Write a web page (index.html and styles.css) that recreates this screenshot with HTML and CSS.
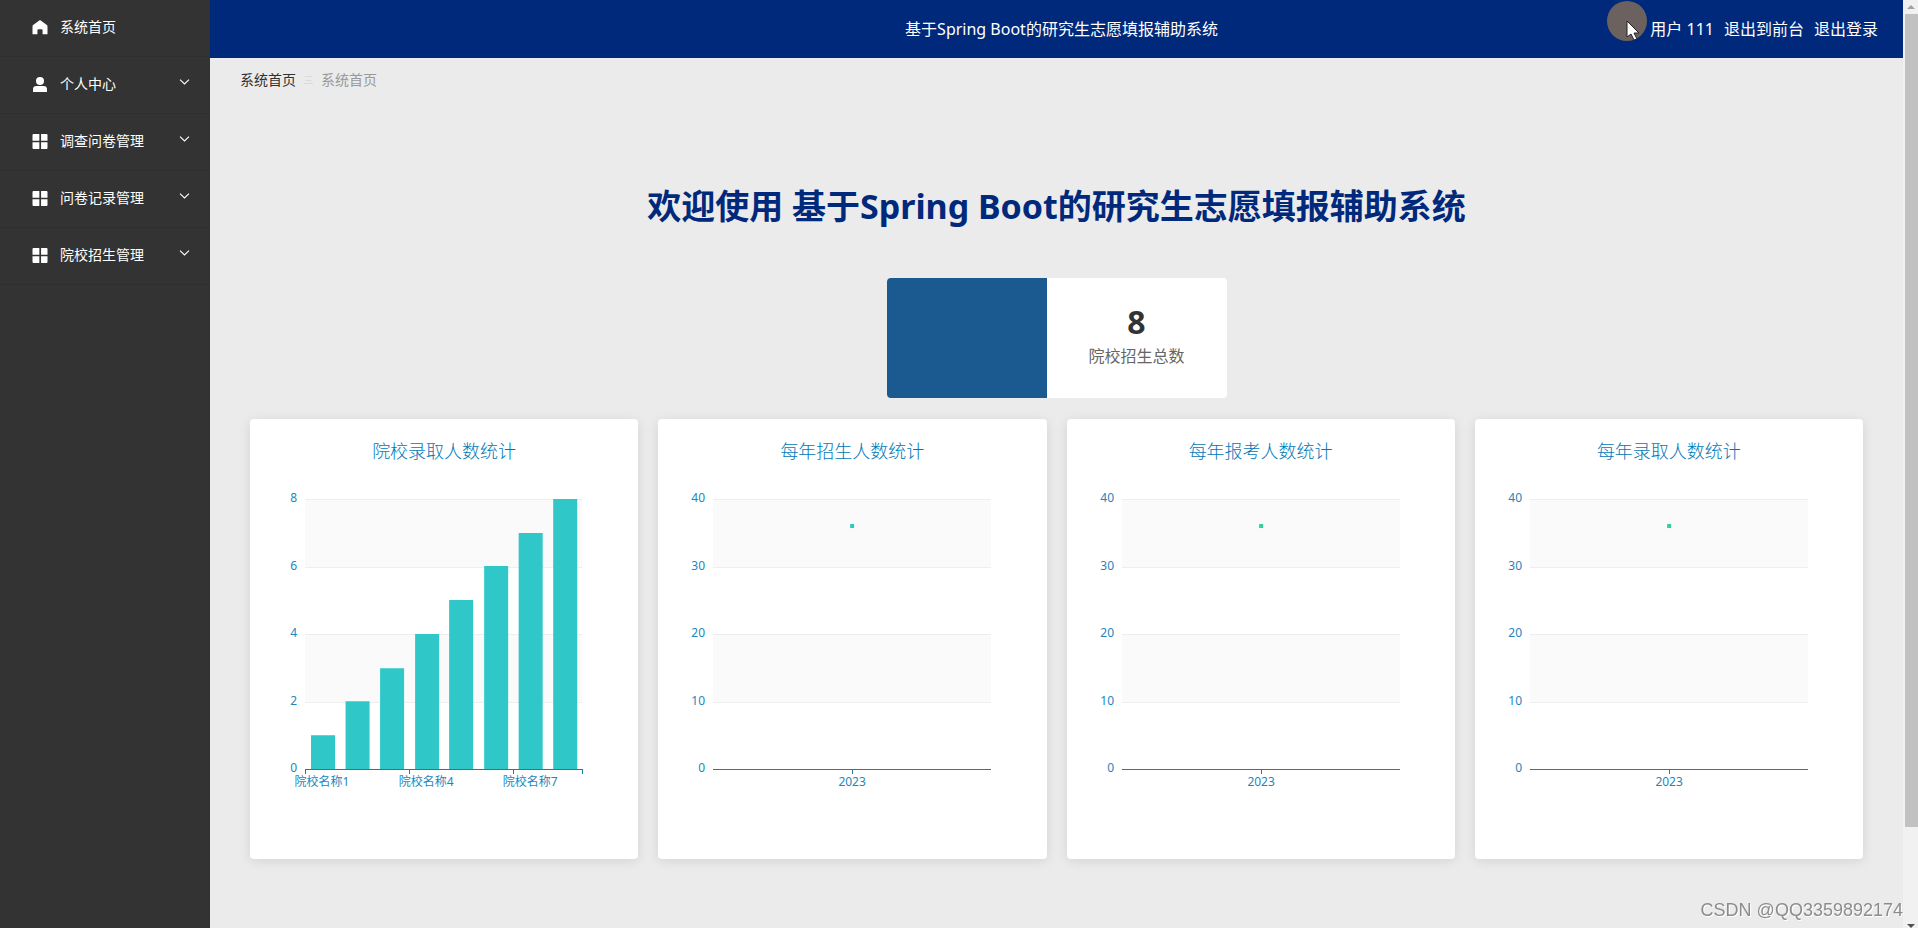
FILE: index.html
```html
<!DOCTYPE html>
<html lang="zh-CN">
<head>
<meta charset="utf-8">
<title>基于Spring Boot的研究生志愿填报辅助系统</title>
<link rel="stylesheet" href="styles.css">
</head>
<body>
<svg class="defs" aria-hidden="true">
  <symbol id="home" viewBox="0 0 14 14"><path d="M7 0 13.4 4.6Q14 5 14 6V13.4H9.4V9.6Q9.4 8.6 8.4 8.6H5.6Q4.6 8.6 4.6 9.6V13.4H0V6Q0 5 .6 4.6Z" fill="currentColor"/></symbol>
  <symbol id="user" viewBox="0 0 14 15"><circle cx="7" cy="4" r="4" fill="currentColor"/><path d="M0 15V12.4Q0 9 3.4 9H10.6Q14 9 14 12.4V15Z" fill="currentColor"/></symbol>
  <symbol id="grid" viewBox="0 0 14 14"><path d="M.6 0H6.4V6.2H0V.6ZM8 0H13.4L14 .6V6.2H8ZM0 7.8H6.4V14H.6L0 13.4ZM8 7.8H14V13.4L13.4 14H8Z" fill="currentColor"/></symbol>
  <symbol id="down" viewBox="0 0 10 6"><path d="M.5.7 5 5 9.5.7" fill="none" stroke="currentColor" stroke-width="1.1"/></symbol>
</svg>
<div class="app">
  <nav class="sidebar">
    <a class="item" href="#"><svg class="icon"><use href="#home"/></svg><span>系统首页</span></a>
    <button class="item"><svg class="icon"><use href="#user"/></svg><span>个人中心</span><svg class="arrow"><use href="#down"/></svg></button>
    <button class="item"><svg class="icon"><use href="#grid"/></svg><span>调查问卷管理</span><svg class="arrow"><use href="#down"/></svg></button>
    <button class="item"><svg class="icon"><use href="#grid"/></svg><span>问卷记录管理</span><svg class="arrow"><use href="#down"/></svg></button>
    <button class="item"><svg class="icon"><use href="#grid"/></svg><span>院校招生管理</span><svg class="arrow"><use href="#down"/></svg></button>
  </nav>
  <div class="page">
    <header class="header">
      <div class="title">基于Spring Boot的研究生志愿填报辅助系统</div>
      <div class="account"><span>用户 111</span><a href="#">退出到前台</a><a href="#">退出登录</a></div>
    </header>
    <nav class="crumbs"><a href="#">系统首页</a><span class="sep">三</span><span class="current">系统首页</span></nav>
    <main class="content">
      <h1>欢迎使用 基于Spring Boot的研究生志愿填报辅助系统</h1>
      <section class="stat">
        <div class="stat-color"></div>
        <div class="stat-text"><strong>8</strong><span>院校招生总数</span></div>
      </section>
      <div class="charts">
        <section class="card">
          <h2>院校录取人数统计</h2>
          <svg class="chart" viewBox="0 0 388 374">
            <path class="band" d="M55 35H332V102H55ZM55 170H332V237H55Z"/>
            <path class="split" d="M55 34.5H332M55 102.5H332M55 169.5H332M55 237.5H332"/>
            <path class="bar" d="M61 304V270H85V304ZM95.500 304V236H119.500V304ZM130 304V203H154V304ZM165 304V169H189V304ZM199 304V135H223V304ZM234 304V101H258V304ZM268.500 304V68H292.500V304ZM303 304V34H327V304Z"/>
            <path class="axis" d="M55 304.500H333M55.500 304V309M159.500 304V309M263.500 304V309M332.500 304V309"/>
            <g class="ylabel"><text x="47" y="37">8</text><text x="47" y="105">6</text><text x="47" y="172">4</text><text x="47" y="240">2</text><text x="47" y="307">0</text></g>
            <g class="xlabel"><text x="72" y="321">院校名称1</text><text x="176" y="321">院校名称4</text><text x="280" y="321">院校名称7</text></g>
          </svg>
        </section>
        <section class="card">
          <h2>每年招生人数统计</h2>
          <svg class="chart" viewBox="0 0 388 374">
            <path class="band" d="M55 35H333V102H55ZM55 170H333V237H55Z"/>
            <path class="split" d="M55 34.5H333M55 102.5H333M55 169.5H333M55 237.5H333"/>
            <path class="axis" d="M55 304.500H333M194.500 304V309"/>
            <rect class="dot teal" x="192" y="59" width="4" height="4"/>
            <g class="ylabel"><text x="47" y="37">40</text><text x="47" y="105">30</text><text x="47" y="172">20</text><text x="47" y="240">10</text><text x="47" y="307">0</text></g>
            <g class="xlabel"><text x="194" y="321">2023</text></g>
          </svg>
        </section>
        <section class="card">
          <h2>每年报考人数统计</h2>
          <svg class="chart" viewBox="0 0 388 374">
            <path class="band" d="M55 35H333V102H55ZM55 170H333V237H55Z"/>
            <path class="split" d="M55 34.5H333M55 102.5H333M55 169.5H333M55 237.5H333"/>
            <path class="axis" d="M55 304.500H333M194.500 304V309"/>
            <rect class="dot green" x="192" y="59" width="4" height="4"/>
            <g class="ylabel"><text x="47" y="37">40</text><text x="47" y="105">30</text><text x="47" y="172">20</text><text x="47" y="240">10</text><text x="47" y="307">0</text></g>
            <g class="xlabel"><text x="194" y="321">2023</text></g>
          </svg>
        </section>
        <section class="card">
          <h2>每年录取人数统计</h2>
          <svg class="chart" viewBox="0 0 388 374">
            <path class="band" d="M55 35H333V102H55ZM55 170H333V237H55Z"/>
            <path class="split" d="M55 34.5H333M55 102.5H333M55 169.5H333M55 237.5H333"/>
            <path class="axis" d="M55 304.500H333M194.500 304V309"/>
            <rect class="dot green" x="192" y="59" width="4" height="4"/>
            <g class="ylabel"><text x="47" y="37">40</text><text x="47" y="105">30</text><text x="47" y="172">20</text><text x="47" y="240">10</text><text x="47" y="307">0</text></g>
            <g class="xlabel"><text x="194" y="321">2023</text></g>
          </svg>
        </section>
      </div>
    </main>
  </div>
  <div class="scrollbar" aria-hidden="true">
    <svg class="scroll-arrow light" viewBox="0 0 14 14"><path d="M3 9 7 5 11 9Z"/></svg>
    <div class="track"><div class="thumb"></div></div>
    <svg class="scroll-arrow last" viewBox="0 0 14 14"><path d="M3 10H11L7 14Z"/></svg>
  </div>
</div>
<svg class="pointer" viewBox="0 0 40 42" aria-hidden="true"><circle cx="20" cy="21" r="20" fill="#6b625f"/><path d="M20 21V37L24 34 27 40 30 39 27 33H32Z" fill="#fff" stroke="#222" stroke-width="1"/></svg>
<div class="watermark">CSDN @QQ3359892174</div>
</body>
</html>
```

FILE: styles.css
```css
* { box-sizing: border-box; }
body {
  margin: 0;
  background: #ebebeb;
  color: #303133;
  font-family: "Noto Sans", "Noto Sans CJK SC", sans-serif;
  font-size: 14px;
}
a { color: inherit; text-decoration: none; }
.defs { display: none; }
.app { display: flex; min-height: 100vh; }

.sidebar { flex: none; width: 210px; background: #333; }
.item {
  display: flex;
  align-items: center;
  width: 100%;
  height: 57px;
  padding: 0 20px 2px 32px;
  border: 0;
  border-bottom: 1px solid #2f2f2f;
  background: none;
  color: #fff;
  font: inherit;
  text-align: left;
}
.item span { padding-bottom: 2px; }
.icon { width: 16px; height: 15px; margin-right: 12px; }
.arrow { width: 11px; height: 6px; margin: 0 0 4px auto; }

.page { flex: 1; min-width: 0; }
.header {
  display: grid;
  grid-template-columns: 1fr auto 1fr;
  align-items: center;
  height: 58px;
  padding: 0 25px 2px 35px;
  background: #00297c;
  color: #fff;
  font-size: 16px;
}
.title { grid-column: 2; }
.account { display: flex; justify-content: flex-end; gap: 10px; }
.crumbs { display: flex; align-items: center; height: 44px; padding: 0 30px 2px; }
.sep { width: 25px; color: #d8d8d8; font-size: 10px; text-align: center; }
.current { color: #999; }

.content { padding: 75px 40px 40px; }
h1 {
  margin: 0 0 42px;
  color: #00297c;
  font-size: 34px;
  line-height: 59px;
  text-align: center;
}
.stat {
  display: flex;
  width: 340px;
  height: 120px;
  margin: 0 auto 21px;
  border-radius: 4px;
  overflow: hidden;
  background: #fff;
}
.stat-color { width: 160px; background: #1b5a90; }
.stat-text {
  display: flex;
  flex: 1;
  flex-direction: column;
  align-items: center;
  justify-content: center;
  padding-bottom: 5px;
}
.stat-text strong { color: #333; font-size: 32px; line-height: 40px; }
.stat-text span { color: #666; font-size: 16px; line-height: 28px; }

.charts { display: grid; grid-template-columns: repeat(4, 1fr); gap: 20px; }
.card {
  padding: 19px 0 20px;
  border-radius: 4px;
  background: #fff;
  box-shadow: 0 2px 12px rgba(0, 0, 0, 0.1);
}
h2 {
  margin: 0 0 1px;
  color: #0078b8;
  font-size: 18px;
  font-weight: 300;
  line-height: 26px;
  text-align: center;
}
.chart { display: block; width: 100%; font-size: 12px; }
.band { fill: #fafafa; }
.split { stroke: #eee; }
.bar { fill: #30c7c9; }
.axis { stroke: #1a7fa8; fill: none; }
.split, .axis, .band { shape-rendering: crispEdges; }
.ylabel { fill: #1b87bd; text-anchor: end; }
.xlabel { fill: #1b87bd; text-anchor: middle; }
.teal { fill: #30c7c0; }
.green { fill: #2fd09f; }

.scrollbar { display: flex; flex: none; flex-direction: column; width: 15px; padding-left: 1px; background: #f1f1f1; }
.scroll-arrow { width: 14px; height: 14px; fill: #505050; }
.light { fill: #a3a3a3; }
.track { flex: 1; }
.thumb { height: 813px; max-height: 100%; margin-left: 1px; background: #c1c1c1; }

.pointer { position: absolute; top: 0; right: 271px; width: 40px; height: 42px; }
.watermark {
  position: fixed;
  right: 15px;
  bottom: 7px;
  color: #8c8c8c;
  font-family: "Liberation Sans", sans-serif;
  font-size: 18px;
  line-height: 22px;
  text-shadow: 1px 1px 0 #fff;
}
```
